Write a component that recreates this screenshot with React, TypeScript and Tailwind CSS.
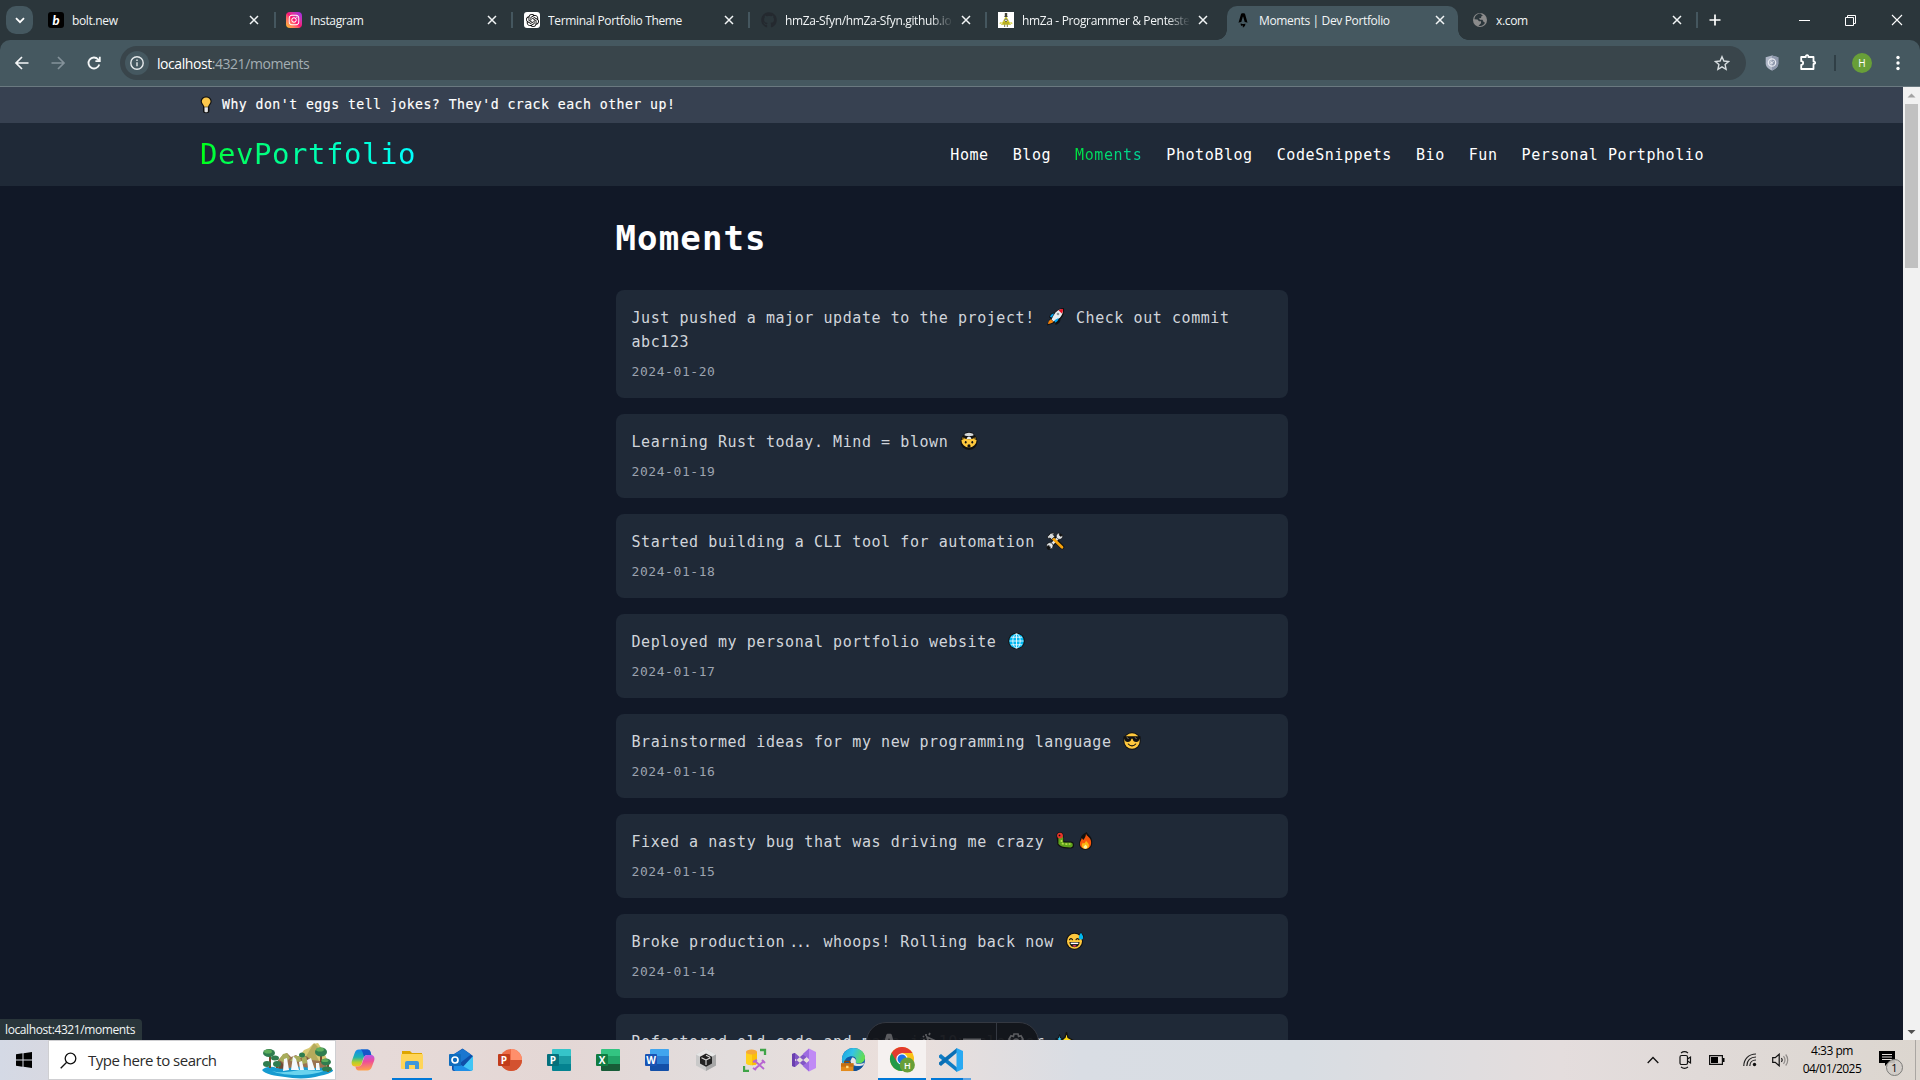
import type { ReactNode } from "react";
import { FaInstagram, FaGithub } from "react-icons/fa";
import { SiOpenai } from "react-icons/si";

const mono = "font-['DejaVu_Sans_Mono','Liberation_Mono',monospace]";

/* ---------- emoji drawings ---------- */

function Emoji({ children }: { children: ReactNode }) {
  return (
    <svg width={22} height={18} viewBox="-2 0 22 18" className="inline-block shrink-0 align-[-3px]">
      {children}
    </svg>
  );
}

const Bulb = () => (
  <svg width="19" height="18" viewBox="0 0 19 18" className="shrink-0">
    <g transform="translate(0 0) scale(1.14 1)">
      <path d="M6.300 .5c-3 0-4.800 2.200-4.800 5c0 2 1.300 3.200 2 4.600v5c0 1.500 1 2.200 2.800 2.200s2.800-.7 2.800-2.200v-5c.7-1.400 2-2.600 2-4.600c0-2.800-1.800-5-4.800-5z" fill="#111" />
      <path d="M6.300 1.500c-2.300 0-3.800 1.800-3.800 4c0 2 1.700 3 2.200 5.200h3.200c.5-2.200 2.200-3.200 2.200-5.200c0-2.200-1.500-4-3.800-4z" fill="#fdc84b" />
      <path d="M4.800 11.200h3v4c0 .6-.6 1-1.500 1s-1.500-.4-1.500-1z" fill="#e6e6e6" />
    </g>
  </svg>
);

const Rocket = () => (
  <Emoji>
    <path d="M18 0c-4 0-7 1.500-9 4.500c-3 0-5 1.500-6 5l2 .5l-1.500 1.500l-2.500 6l6-2l2-1l.5 2.500c3.500-1 5-3 5-6c3-2.500 4-6.500 3.500-11z" fill="#111" />
    <path d="M17 1c-3.500 0-7 2-9.500 6.500l-2 4l2 2l4-2c4-2.500 5.500-6 5.500-10.500z" fill="#e9edf0" />
    <path d="M17 1c-1.500 0-3 .3-4.500 1.200l3.300 3.300c.9-1.500 1.200-3 1.200-4.500z" fill="#e81224" />
    <path d="M8 5.500c-2 0-3.200 1.500-4 3.200l2 .8zM12.500 10c0 2-1 3.500-3.500 4.700l-.5-2.500z" fill="#00a3ee" />
    <path d="M4.800 11.300l2.700 2.500c-1.500 1.500-3.500 2-5.500 2.200c.3-2 1-3.600 2.800-4.700z" fill="#f7830b" />
    <circle cx="12" cy="6" r="1.300" fill="#8a9499" />
  </Emoji>
);

const MindBlown = () => (
  <Emoji>
    <circle cx="9" cy="9.500" r="8.500" fill="#111" />
    <path d="M4 3c0-2 2-3 5-3s5 1 5 3l-2 2h-6z" fill="#111" />
    <path d="M1.400 8a7.600 7.600 0 1 0 15.200 0l-3.100-1.300l-4.500 .5l-4.500-.5z" fill="#ffc83d" />
    <path d="M2.200 5.600l3 .4v.9l-3.400-.5zM15.800 5.600l-3 .4v.9l3.400-.5z" fill="#b98a16" />
    <path d="M4.600 3.400c-.4-1.300 .8-2.100 2-2.100c1-.9 3.800-.9 4.800 0c1.200 0 2.400 .8 2 2.100l-2.400 .6h-4z" fill="#d4d8da" />
    <path d="M7.500 5l1.500-.6l1.500 .6l1 2h-5z" fill="#e8ebec" />
    <ellipse cx="5.700" cy="10.200" rx=".9" ry="1.300" fill="#111" />
    <ellipse cx="12.300" cy="10.200" rx=".9" ry="1.300" fill="#111" />
    <ellipse cx="9" cy="14" rx="1.600" ry="1.700" fill="#111" />
  </Emoji>
);

const Tools = () => (
  <Emoji>
    <path d="M3 15.500L14 4" stroke="#111" strokeWidth="4.500" strokeLinecap="round" />
    <path d="M5 3.500L16 15" stroke="#111" strokeWidth="4.500" strokeLinecap="round" />
    <path d="M3.500 14.500L13.500 4.500" stroke="#e3e6e8" strokeWidth="2.500" />
    <path d="M16.500 3.200a3.200 3.200 0 1 1-3-2.200l-.2 2.200l1.500 1.200zM.8 14.500a3.200 3.200 0 1 1 3 2.500l.5-2.300l-1.500-1.200z" fill="#e3e6e8" stroke="#111" strokeWidth=".7" />
    <path d="M7 6.500L16 15.300" stroke="#f7a30b" strokeWidth="2.800" strokeLinecap="round" />
    <path d="M1.200 5l3.500-3.700l4-.5l-1.500 1.700l1.500 2l-3 3l-1.700-1.500l-1.300.5z" fill="#d5d9db" stroke="#111" strokeWidth=".8" />
  </Emoji>
);

const Globe = () => (
  <Emoji>
    <circle cx="8.500" cy="9" r="8.300" fill="#111" />
    <circle cx="8.500" cy="9" r="7.300" fill="#00b7f0" />
    <g stroke="#e9f8ff" strokeWidth=".9" fill="none">
      <ellipse cx="8.500" cy="9" rx="3.700" ry="7.200" />
      <path d="M8.500 1.800v14.400M1.500 9h14M2.800 5.200h11.400M2.800 12.800h11.400" />
    </g>
  </Emoji>
);

const Cool = () => (
  <Emoji>
    <circle cx="9" cy="9" r="8.700" fill="#111" />
    <circle cx="9" cy="9" r="7.700" fill="#ffc83d" />
    <path d="M.5 4.200h17v2.300l-1 .2c-.3 2-1.300 3.300-3.300 3.300s-3.200-1.200-3.600-3.300h-1.200c-.4 2.100-1.600 3.300-3.600 3.300s-3-1.300-3.300-3.300l-1-.2z" fill="#111" />
    <path d="M4 5.200l1.500 1.800M12 5.200l1.500 1.800" stroke="#8a8a8a" strokeWidth=".8" />
    <path d="M5.300 12c2 2.500 5.400 2.500 7.400 0" stroke="#111" strokeWidth="1.100" fill="none" strokeLinecap="round" />
  </Emoji>
);

const Bug = () => (
  <Emoji>
    <path d="M4 3.800L4.800 11C6.500 13.500 9 12.700 14.500 13" stroke="#111" strokeWidth="7" strokeLinecap="round" fill="none" />
    <path d="M4.800 6v5c1.700 2.500 5 1.800 9.700 2" stroke="#5ea21c" strokeWidth="4.800" strokeLinecap="round" fill="none" />
    <path d="M5.500 8v3c1.500 1.300 4 1 9 1" stroke="#b5dc4a" strokeWidth="1.700" fill="none" strokeDasharray="2 1.500" />
    <circle cx="4" cy="3.600" r="2.900" fill="#e8352a" />
    <circle cx="3.500" cy="3.400" r=".9" fill="#111" />
  </Emoji>
);

const Fire = () => (
  <Emoji>
    <g transform="translate(-.8 0)">
      <path d="M9.500 0c.5 2 4 3.800 5 7c1.800 6-1 10.800-6.200 10.800C3 17.800 1 13.500 2.200 9.500c.5-1.800 1.500-3 1.800-5C5 2.500 7.500 1.500 9.500 0z" fill="#111" />
      <path d="M8.800 1.500c.3 2.500 3.700 3.500 4.700 6.500c1.400 5-.8 8.800-5.200 8.800S2 13.500 3 10c.6-1.500 1.300-2.500 1.600-4l1.500 2c1.600-2 2.700-4 2.700-6.500z" fill="#f9570c" />
      <path d="M8.800 8.500c.8 2 3 2.500 3 5c0 2-1.300 3.300-3.500 3.300s-3.700-1.300-3.700-3.300c0-1.500.8-2 1-3l1 1c1.200-.6 2-1.500 2.200-3z" fill="#fdb813" />
      <path d="M8.500 12.500c.5 1 1.500 1.300 1.500 2.500s-.8 1.800-1.800 1.800s-1.900-.6-1.900-1.700s1.500-1.300 2.200-2.600z" fill="#fff3a6" />
    </g>
  </Emoji>
);

const Sweat = () => (
  <Emoji>
    <circle cx="8.500" cy="9.200" r="8.500" fill="#111" />
    <path d="M15 0c-1.800 2-3 3.500-3 5.500l3 3l3-3c0-2-1.300-3.500-3-5.500z" fill="#111" />
    <circle cx="8.500" cy="9.200" r="7.500" fill="#ffc83d" />
    <path d="M15 .8c-1.300 2-2.200 3.200-2.200 4.600a2.200 2.200 0 0 0 4.400 0c0-1.400-1-2.600-2.200-4.600z" fill="#00b7f0" />
    <path d="M3.500 7.800c.6-1.600 2.400-1.600 3 0M10 7.800c.6-1.600 2.400-1.600 3 0" stroke="#111" strokeWidth="1.100" fill="none" strokeLinecap="round" />
    <path d="M3.500 10h10c0 3.200-2 5.200-5 5.200s-5-2-5-5.200z" fill="#111" />
    <path d="M4.700 10.600h7.600v1.500h-7.600z" fill="#fff" />
    <path d="M6.300 14c1-1.200 3.400-1.200 4.400 0c-1 .9-3.400.9-4.400 0z" fill="#f03a5f" />
  </Emoji>
);

const Sparkles = () => (
  <Emoji>
    <path d="M10.500 0l1.500 5.500l4.500 2.500l-4.500 2.500l-1.500 6l-1.500-6l-4-2.500l4-2.500z" fill="#ffd91a" stroke="#111" strokeWidth="1.200" />
    <path d="M3.500 2.500l1 3.500l3 1l-3 1l-1 3l-1-3l-3-1l3-1z" fill="#35c6f5" stroke="#111" strokeWidth="1" />
  </Emoji>
);

/* ---------- browser chrome ---------- */

const Close = () => (
  <svg width="10" height="10" viewBox="0 0 10 10" className="shrink-0">
    <path d="M1 1l8 8M9 1l-8 8" stroke="#f2f5f6" strokeWidth="1.500" />
  </svg>
);

const BoltIcon = () => (
  <div className="flex size-4 items-center justify-center rounded-[3px] bg-black font-['Lato',sans-serif] text-[13px] leading-none font-black text-white italic">
    b
  </div>
);

const InstaIcon = () => (
  <div className="flex size-4 items-center justify-center rounded-[4px] bg-linear-to-bl from-[#9a16f0] via-[#fb0d72] to-[#ffc400]">
    <FaInstagram className="size-3 text-white" />
  </div>
);

const GptIcon = () => (
  <div className="flex size-4 items-center justify-center rounded-[3px] bg-white">
    <SiOpenai className="size-[13px] text-black" />
  </div>
);

const BillIcon = () => (
  <svg width="16" height="16" viewBox="0 0 16 16">
    <rect width="16" height="16" fill="#fff" />
    <path d="M8 4.500l4.500 8h-9z" fill="#e9e21c" stroke="#b9b42c" strokeWidth=".6" />
    <path d="M6.800 1h2.400v3.500h-2.400zM6.300 4.200h3.400v.8h-3.400z" fill="#44443a" />
    <circle cx="8" cy="8.300" r="1.300" fill="#fff" stroke="#333" strokeWidth=".7" />
    <path d="M3.500 10.500l-1.800 1M12.500 10.500l1.800 1" stroke="#d6cf26" strokeWidth="1.300" />
    <path d="M6.700 12.500v2.500M9.300 12.500v2.500" stroke="#6b6b30" strokeWidth=".9" />
    <path d="M5 11h6" stroke="#8b7f2a" />
  </svg>
);

const AstroIcon = ({ color = "#000", size = 16 }: { color?: string; size?: number }) => (
  <svg width={size} height={size} viewBox="0 0 16 16" fill={color}>
    <path d="M9.800 1.700c.2.200.3.500.4.900l2.300 8.200c-.9-.5-1.900-.8-2.800-.9l-1.500-5.200a.2.200 0 0 0-.4 0l-1.500 5.200c-1 .1-2 .4-2.800.9l2.400-8.200c.1-.4.200-.7.400-.9c.3-.3.700-.4 1.200-.4h1.100c.5 0 .9.1 1.200.4z" />
    <path d="M10.200 11.400c-.4.300-1.200.6-2.100.6c-1.100 0-2-.3-2.300-.8c-.4 1.400.1 2.300.9 2.900c0-.9.900-1 1.100-.1c.1.600-.2 1.200.3 1.700c.2-.9 1.200-1 1.700-1.700c.6-.8.600-1.700.4-2.600z" />
  </svg>
);

const EarthIcon = () => (
  <svg width="16" height="16" viewBox="0 0 16 16">
    <circle cx="8" cy="8" r="7" fill="#8b8b8b" />
    <path d="M8.500 1.500c-3.200 0-6 2.700-6 5.800l3 .2l1.500 1.800h2v2l-2.500 2.500c3 .8 5.500-.8 6.500-3l-1.500-1l-1-2h-2.500l-1-1.500l2-.3l.5-2h1.500z" fill="#2c373c" />
  </svg>
);

const tabs: { title: string; icon: ReactNode; pad: string; active?: boolean; fade?: boolean }[] = [
  { title: "bolt.new", icon: <BoltIcon />, pad: "pl-[9px] pr-[15px]" },
  { title: "Instagram", icon: <InstaIcon />, pad: "pl-[10px] pr-[14px]" },
  { title: "Terminal Portfolio Theme", icon: <GptIcon />, pad: "pl-[11px] pr-[14px]" },
  { title: "hmZa-Sfyn/hmZa-Sfyn.github.io", icon: <FaGithub className="size-4 text-[#24292f]" />, pad: "pl-[11px] pr-[14px]", fade: true },
  { title: "hmZa - Programmer & Pentester", icon: <BillIcon />, pad: "pl-[11px] pr-[16px]", fade: true },
  { title: "Moments | Dev Portfolio", icon: <AstroIcon />, pad: "pl-[11px] pr-[16px]", active: true },
  { title: "x.com", icon: <EarthIcon />, pad: "pl-[11px] pr-[14px]" },
];

function Tab({ title, icon, pad, active, fade }: (typeof tabs)[number]) {
  const noSep = active || title.startsWith("hmZa - ");
  return (
    <div className="relative flex h-[41px] w-[237px] shrink-0 pt-[7px]">
      {active && (
        <>
          <div className="absolute inset-x-[3px] top-[6px] bottom-0 rounded-t-[10px] bg-[#455860]" />
          <div className="absolute bottom-[1px] -left-[7px] size-[10px] bg-[radial-gradient(circle_at_0_0,transparent_9.5px,#455860_10px)]" />
          <div className="absolute -right-[7px] bottom-[1px] size-[10px] bg-[radial-gradient(circle_at_100%_0,transparent_9.5px,#455860_10px)]" />
        </>
      )}
      <div className={"relative flex h-[26px] min-w-0 flex-1 items-center " + pad}>
        <div className="flex size-4 shrink-0 items-center justify-center">{icon}</div>
        <div
          className={
            "ml-2 w-[169px] shrink-0 overflow-hidden pt-px text-[12px] tracking-[-0.35px] whitespace-nowrap text-[#f2f5f6] " +
            (fade ? "[mask-image:linear-gradient(90deg,#000_145px,transparent_168px)]" : "")
          }
        >
          {title}
        </div>
        <div className="ml-auto">
          <Close />
        </div>
      </div>
      {!noSep && <div className="mt-[5px] h-4 w-[2px] bg-[#45575f]" />}
    </div>
  );
}

function TabStrip() {
  return (
    <div className="flex h-[40px] bg-[#2b363b] pl-[6px]">
      <div className="mt-[6px] mr-[6px] flex h-7 w-[27px] shrink-0 items-center justify-center rounded-[10px] bg-[#455860]">
        <svg width="10" height="7" viewBox="0 0 10 7">
          <path d="M1 1.200l4 4l4-4" stroke="#fff" strokeWidth="1.800" fill="none" />
        </svg>
      </div>
      {tabs.map((t) => (
        <Tab key={t.title} {...t} />
      ))}
      <svg width="12" height="12" viewBox="0 0 12 12" className="mt-[14px] ml-[11px]">
        <path d="M6 .5v11M.5 6h11" stroke="#fff" strokeWidth="1.700" />
      </svg>
      <div className="mr-[17px] ml-auto flex h-[40px] items-center gap-[35px]">
        <div className="h-px w-[11px] bg-white" />
        <svg width="11" height="11" viewBox="0 0 11 11" fill="none" stroke="#fff">
          <path d="M.5 2.500h8v8h-8zM2.500 2.500v-2h8v8h-2" />
        </svg>
        <svg width="12" height="12" viewBox="0 0 12 12" stroke="#fff" strokeWidth="1.100">
          <path d="M1 1l10 10M11 1l-10 10" />
        </svg>
      </div>
    </div>
  );
}

function Toolbar() {
  return (
    <div className="bg-[#2b363b]">
      <div className="flex h-[46px] items-center rounded-t-[10px] bg-[#455860] pl-[14px]">
        <svg width="16" height="16" viewBox="0 0 16 16" fill="none" stroke="#f4f6f7" strokeWidth="1.700">
          <path d="M14.500 8h-12M8 2l-6 6l6 6" />
        </svg>
        <svg width="16" height="16" viewBox="0 0 16 16" fill="none" stroke="#84929a" strokeWidth="1.700" className="ml-5">
          <path d="M1.500 8h12M8 2l6 6l-6 6" />
        </svg>
        <svg width="16" height="16" viewBox="0 0 16 16" fill="none" stroke="#f4f6f7" strokeWidth="1.800" className="ml-5">
          <path d="M13.300 9.500a5.500 5.500 0 1 1-1.200-5.200l1.400 1.400M13.800 1.800v4.400h-4.400" />
        </svg>
        <div className="ml-[18px] flex h-[34px] w-[1626px] items-center rounded-full bg-[#39454b] pl-[5px]">
          <div className="flex size-6 items-center justify-center rounded-full bg-[#455860]">
            <svg width="14" height="14" viewBox="0 0 14 14" fill="none" stroke="#e6eaec" strokeWidth="1.400">
              <circle cx="7" cy="7" r="6.200" />
              <path d="M7 6.200v4M7 3.500v1.500" />
            </svg>
          </div>
          <div className="ml-2 text-[14px] tracking-[-0.44px] text-[#a4aeb3]">
            <span className="text-white">localhost</span>:4321/moments
          </div>
          <svg width="16" height="16" viewBox="0 0 16 16" fill="none" stroke="#d8dee1" strokeWidth="1.400" className="mr-4 ml-auto">
            <path d="M8 1.700l1.900 4.300l4.700.5l-3.500 3.100l1 4.700l-4.100-2.400l-4.100 2.400l1-4.700l-3.500-3.100l4.700-.5z" />
          </svg>
        </div>
        <svg width="14" height="16" viewBox="0 0 14 16" className="ml-[19px]">
          <path d="M7 .5l6.300 1.800v6c0 3.500-2.800 6-6.300 7.200c-3.500-1.200-6.300-3.700-6.300-7.200v-6z" fill="#aeb6c6" />
          <path d="M7 .5l6.300 1.800v6c0 3.500-2.800 6-6.300 7.200z" fill="#8f99ad" />
          <circle cx="7" cy="7.500" r="3.700" fill="none" stroke="#e8ebf2" strokeWidth="1.200" />
          <path d="M5.300 8.500l3.400-2M5.500 6.500l2 2.500" stroke="#e8ebf2" />
        </svg>
        <svg width="18" height="18" viewBox="0 0 18 18" fill="none" stroke="#fff" strokeWidth="1.800" className="mt-[-2px] ml-[20px]">
          <path d="M2.200 4h4.600c-.3-2.600 2.900-2.600 2.600 0h5.100v4.500c2.200-.2 2.200 2.700 0 2.500v5h-12.300v-4.200c2.600-.2 2.600-3.400 0-3.600z" strokeLinejoin="round" />
        </svg>
        <div className="ml-[17px] h-4 w-[2px] bg-[#303f46]" />
        <div className="ml-[16px] flex size-5 items-center justify-center rounded-full bg-[#689f38] text-[10px] text-white">H</div>
        <svg width="4" height="16" viewBox="0 0 4 16" fill="#fff" className="ml-6">
          <circle cx="2" cy="2.500" r="1.700" />
          <circle cx="2" cy="8" r="1.700" />
          <circle cx="2" cy="13.500" r="1.700" />
        </svg>
      </div>
      <div className="h-px bg-[#6a7980]" />
    </div>
  );
}

/* ---------- web page ---------- */

const Ellipsis = () => <span className="inline-block w-[28.8px] text-center tracking-[-2.2px]">...</span>;

const moments: { text: ReactNode; icons: ReactNode; rest?: string; date: string }[] = [
  { text: "Just pushed a major update to the project! ", icons: <Rocket />, rest: " Check out commit abc123", date: "2024-01-20" },
  { text: "Learning Rust today. Mind = blown ", icons: <MindBlown />, date: "2024-01-19" },
  { text: "Started building a CLI tool for automation ", icons: <Tools />, date: "2024-01-18" },
  { text: "Deployed my personal portfolio website ", icons: <Globe />, date: "2024-01-17" },
  { text: "Brainstormed ideas for my new programming language ", icons: <Cool />, date: "2024-01-16" },
  { text: "Fixed a nasty bug that was driving me crazy ", icons: <><Bug /><Fire /></>, date: "2024-01-15" },
  { text: <>Broke production<Ellipsis /> whoops! Rolling back now </>, icons: <Sweat />, date: "2024-01-14" },
  { text: "Refactored old code and made it 10x cleaner ", icons: <Sparkles />, date: "2024-01-13" },
];

const links = ["Home", "Blog", "Moments", "PhotoBlog", "CodeSnippets", "Bio", "Fun", "Personal Portpholio"];

function Page() {
  return (
    <div className={"h-full flex-1 overflow-hidden bg-[#111827] " + mono}>
      <div className="flex h-[36px] items-center bg-[#374151] pl-[199px] text-[13.2px] tracking-[0.455px] text-white [-webkit-text-stroke:0.15px_white]">
        <Bulb />
        <span className="ml-[4px] whitespace-pre">Why don't eggs tell jokes? They'd crack each other up!</span>
      </div>
      <div className="flex h-[63px] items-center justify-between bg-[#1f2937] pr-[199px] pl-[200px]">
        <div className="mb-px bg-linear-to-r from-[#00ff00] to-[#00ffff] bg-clip-text text-[29px] leading-9 tracking-[0.54px] text-transparent">
          DevPortfolio
        </div>
        <div className="flex gap-6 pt-[2px] text-[15px] tracking-[0.57px] text-white">
          {links.map((l) =>
            l === "Moments" ? (
              <span key={l} className="bg-linear-to-r from-[#00e03c] to-[#00d69a] bg-clip-text text-transparent">
                {l}
              </span>
            ) : (
              <span key={l}>{l}</span>
            ),
          )}
        </div>
      </div>
      <div className="mx-auto w-[672px] pt-8">
        <h1 className="h-10 text-[34px] leading-10 font-bold tracking-[1.13px] text-white">Moments</h1>
        <div className="mt-8 flex flex-col gap-4">
          {moments.map((m) => (
            <div key={m.date} className="rounded-lg bg-[#1f2937] px-4 pt-4 pb-4">
              <p className="text-[15px] leading-6 tracking-[0.57px] text-[#d1d5db]">
                {m.text}
                {m.icons}
                {m.rest}
              </p>
              <p className="mt-2 text-[13px] leading-5 tracking-[0.57px] text-[#9ca3af]">{m.date}</p>
            </div>
          ))}
        </div>
      </div>
    </div>
  );
}

function Scrollbar() {
  return (
    <div className="flex w-[17px] shrink-0 flex-col items-center bg-[#f1f1f1]">
      <svg width="17" height="17" viewBox="0 0 17 17" fill="#a3a3a3">
        <path d="M8.500 6.500l4 4h-8z" />
      </svg>
      <div className="h-[164px] w-[13px] bg-[#c1c1c1]" />
      <svg width="17" height="17" viewBox="0 0 17 17" fill="#505050" className="mt-auto">
        <path d="M8.500 11l4-4h-8z" />
      </svg>
    </div>
  );
}

function DevToolbar() {
  return (
    <div className="absolute top-[935px] left-[866px] flex h-10 w-[173px] rounded-full border border-[#343841] bg-[#13151a]/95 pt-[9px] text-[#5a5b5f]">
      <div className="flex w-[129px] justify-around pr-1 pl-0">
        <AstroIcon color="#5a5b5f" size={22} />
        <svg width="20" height="20" viewBox="0 0 20 20" fill="none" stroke="#5a5b5f" strokeWidth="1.700">
          <path d="M6 5l11 5l-5 2l-2 5zM3 5l-1-1M5 2l0 2M9 1l-1 2M2 8h2" />
        </svg>
        <svg width="20" height="20" viewBox="0 0 20 20" fill="none" stroke="#5a5b5f" strokeWidth="1.800">
          <path d="M1 7.500h18M1 13h18" />
        </svg>
      </div>
      <div className="-mt-[9px] w-px bg-[#343841]" />
      <svg width="20" height="20" viewBox="0 0 20 20" fill="none" stroke="#5a5b5f" strokeWidth="1.700" className="ml-[9px]">
        <path d="M8 2h4l.6 2.500l2.400-.7l2 3.400l-1.800 1.800l1.800 2l-2 3.400l-2.400-.7l-.6 2.500h-4l-.6-2.500l-2.400.7l-2-3.400l1.800-2l-1.800-1.800l2-3.400l2.400.7z" />
        <circle cx="10" cy="9.500" r="2.500" />
      </svg>
    </div>
  );
}

/* ---------- taskbar ---------- */

const Scenery = () => (
  <svg width="72" height="37" viewBox="0 0 72 37" className="ml-auto">
    <path d="M36 16l6-8l5-2l4-4l5-1l4 6l5 10l2 12h-31z" fill="#d8c873" />
    <path d="M52 1l4 4l-2 8l4 8l-8-3l-3 4l-4-6z" fill="#b5ab5c" />
    <path d="M16 18l5-5l4-2l4 4l5-2l4 3l6-2l6 4l8 1l6 4l3 8h-52v-10z" fill="#9a7350" />
    <path d="M17 18l4-6l4-1l3 5l-5 5zM28 19l4-5l5 0l3 6zM40 14l4 1l2 6l-6 1z" fill="#a8ad5c" />
    <path d="M18 19l4 4l-1 6h-5zM45 15l3 7l-3 6z" fill="#6f4a34" />
    <path d="M0 28c4-4 10-4 15-2c6 2 12 0 18-1s14 1 20 1s14-1 18 2c1 2-8 5-14 6c-8 3-24 3-34 1c-10-1-20-3-23-7z" fill="#169bd0" />
    <path d="M10 29c9 3 20 0 27-1s18 2 27 0c-8 4-20 5-28 5s-20-1-26-4z" fill="#6ad4ee" />
    <path d="M22 17l3-1l2 12l-6 1zM31 14l3 3l3 11h-8zM37 20l3-1l2 9h-4zM45 18l4-2l4 12h-7zM54 21l3 0l1 7h-4z" fill="#f4f9fc" />
    <g fill="#7b4a2c">
      <path d="M7 14h2v12h-2zM58 11h2v9h-2zM65 20h2v10h-2zM14 20h2v6h-2z" />
    </g>
    <g fill="#2f7d4f">
      <ellipse cx="7" cy="11" rx="6" ry="4" />
      <ellipse cx="13" cy="16" rx="4" ry="2.500" />
      <ellipse cx="5" cy="22" rx="4" ry="3" />
      <ellipse cx="15" cy="22" rx="4" ry="3" />
      <ellipse cx="59" cy="10" rx="6" ry="4.500" />
      <ellipse cx="64" cy="20" rx="5" ry="3.500" />
      <ellipse cx="65" cy="27" rx="5" ry="2.500" />
      <ellipse cx="40" cy="13" rx="3" ry="2.500" />
    </g>
    <g fill="#5fae5c">
      <ellipse cx="6" cy="9.500" rx="4" ry="2" />
      <ellipse cx="58" cy="7.500" rx="4" ry="2" />
      <ellipse cx="63" cy="18.500" rx="3.500" ry="1.500" />
    </g>
  </svg>
);

function Office({ letter, dark, top, mid, low, round }: { letter: string; dark: string; top: string; mid: string; low: string; round?: boolean }) {
  return (
    <svg width="24" height="24" viewBox="0 0 24 24">
      {round ? (
        <>
          <circle cx="13" cy="12" r="11" fill={mid} />
          <path d="M13 1a11 11 0 0 1 11 11h-11z" fill={top} />
          <path d="M2 12h22a11 11 0 0 1-22 0z" fill={low} />
        </>
      ) : (
        <>
          <path d="M6 1h17a1 1 0 0 1 1 1v6h-19v-6a1 1 0 0 1 1-1z" fill={top} />
          <path d="M5 8h19v8h-19z" fill={mid} />
          <path d="M5 16h19v6a1 1 0 0 1-1 1h-17a1 1 0 0 1-1-1z" fill={low} />
        </>
      )}
      <rect x="0" y="6" width="12" height="12" rx="1" fill={dark} />
      <text x="6" y="15.500" textAnchor="middle" fontSize="10" fontWeight="700" fontFamily="Open Sans, sans-serif" fill="#fff">
        {letter}
      </text>
    </svg>
  );
}

const Copilot = () => (
  <svg width="24" height="24" viewBox="0 0 24 24">
    <defs>
      <linearGradient id="cpA" x1="0" y1="0" x2="0" y2="1">
        <stop offset="0" stopColor="#1688ee" />
        <stop offset=".45" stopColor="#1bb3b0" />
        <stop offset=".75" stopColor="#b4cf2a" />
        <stop offset="1" stopColor="#f9c01e" />
      </linearGradient>
      <linearGradient id="cpB" x1="0.300" y1="0" x2=".4" y2="1">
        <stop offset="0" stopColor="#b05cf0" />
        <stop offset=".45" stopColor="#ee4d99" />
        <stop offset="1" stopColor="#ffa24a" />
      </linearGradient>
    </defs>
    <path d="M16.500 1.500c1.500 0 2.500 1 3 2.500l.8 3h-4.300c-2 0-3 1.500-3.500 3l-2 6c-.6 1.500-1.500 2.500-3 2.500h-3.500c-3 0-4-3-3-6l2.500-7c.9-2.500 2-4 4.500-4z" fill="url(#cpA)" />
    <path d="M16.500 1.500c1.500 0 2.500 1 3 2.500l.8 3h-4.300c-1.500 0-2.500.8-3 2l-1.500-5c-.4-1.300-.8-2-2-2.500z" fill="#1556c8" />
    <path d="M7.500 22.500c-1.500 0-2.300-1-2.700-2.500l-.4-1.500h2.800c2 0 3-1 3.600-2.500l2.200-6.500c.6-1.500 1.400-2.500 3-2.500h4c3 0 4 2.500 3.200 5.500l-2.400 6.500c-.8 2.200-2.200 3.500-4.500 3.500z" fill="url(#cpB)" />
  </svg>
);

const Explorer = () => (
  <svg width="24" height="24" viewBox="0 0 24 24">
    <path d="M2 3h8l2 2h10v4h-20z" fill="#dea500" />
    <path d="M2 6h20a1 1 0 0 1 1 1v13a1 1 0 0 1-1 1h-20a1 1 0 0 1-1-1v-13a1 1 0 0 1 1-1z" fill="#ffd558" />
    <path d="M5 21v-6a2 2 0 0 1 2-2h10a2 2 0 0 1 2 2v6h-4v-4h-6v4z" fill="#3f97dc" />
  </svg>
);

const Outlook = () => (
  <svg width="24" height="24" viewBox="0 0 24 24">
    <path d="M3 7.500l10.500-7l10.500 7.500v13l-2 2h-17a2 2 0 0 1-2-2z" fill="#0f4fa8" />
    <path d="M5 6l9-5l8 5.500l-11 8.500h-6z" fill="#1a76cf" />
    <path d="M24 8v13a2 2 0 0 1-2 2h-12z" fill="#41c5f5" />
    <path d="M5 13l17.500 10h-16a2.500 2.500 0 0 1-2-2z" fill="#1e8ee6" />
    <rect x="0" y="6" width="12" height="12" rx="1" fill="#0f6cbd" />
    <circle cx="6" cy="12" r="3" fill="none" stroke="#fff" strokeWidth="1.700" />
  </svg>
);

const Unity = () => (
  <svg width="24" height="24" viewBox="0 0 24 24">
    <path d="M12 1l10 5.500v11l-10 5.500l-10-5.500v-11z" fill="#c9c9c9" />
    <path d="M12 1l10 5.500l-10 5.500l-10-5.500z" fill="#e6e6e6" />
    <path d="M22 6.500v11l-10 5.500v-11z" fill="#a7a7a7" />
    <path d="M12 5.500l6 3.300v6.700l-6 3.300l-6-3.300v-6.700z" fill="#222" />
    <path d="M12 12l-4.500-2.300M12 12v5M12 12l4.500-2.300M12 7.300l4 2" stroke="#d9d9d9" strokeWidth="1.100" />
  </svg>
);

const Sql = () => (
  <svg width="24" height="24" viewBox="0 0 24 24">
    <path d="M3 4h11v11c0 3-11 3-11 0z" fill="#ffd21c" />
    <path d="M9 4h5v11c0 1.500-2 2.200-5 2.200z" fill="#fbbf0a" />
    <ellipse cx="8.500" cy="4" rx="5.500" ry="2.500" fill="#f5a83a" />
    <path d="M17 2h5v5M1 18v5h5" stroke="#3fa447" strokeWidth="2.300" fill="none" />
    <path d="M12 21l9-8M12 13l9 8" stroke="#b765d1" strokeWidth="1.800" />
    <path d="M10 14l4-2M19 12l3 3M10 20l3 2" stroke="#b765d1" strokeWidth="2" />
  </svg>
);

const VisualStudio = () => (
  <svg width="24" height="24" viewBox="0 0 24 24">
    <path d="M0 6l3-1l14 12v6l-17-15zM0 18l3 1l14-12v-6l-17 15z" fill="#8256c6" />
    <path d="M0 6l3-1v14l-3-1z" fill="#6a3fae" />
    <path d="M17 .5l7 3.500v16l-7 3.500l-6-5.500l6-5v-2l-6-5z" fill="#c08af5" />
    <path d="M17 .5v23l-6-5.500l6-5v-2l-6-5z" fill="#9d6be0" />
  </svg>
);

const Edge = () => (
  <svg width="25" height="25" viewBox="0 0 26 26">
    <defs>
      <linearGradient id="edgeA" x1="0" y1="0" x2="1" y2="0.300">
        <stop offset="0" stopColor="#1aa0dd" />
        <stop offset=".5" stopColor="#33c3e8" />
        <stop offset="1" stopColor="#62dd55" />
      </linearGradient>
    </defs>
    <circle cx="13" cy="13" r="12" fill="#0f5aa8" />
    <path d="M1 13c0-7 5.500-12 12-12s12 4.500 12 10c0 4-3 6-6.500 6c-2.500 0-4-1-3-2.500c1-2-.5-5-4-5c-4.500 0-8 2.500-8.500 8c-1-1-2-2.500-2-4.500z" fill="url(#edgeA)" />
    <path d="M11.500 11c2.500 0 4.500 2 4 4c-.6 1.500 .5 2.500 2.500 2.500c3 0 5-.5 6-1.500c0 2-1 3.500-3 3.500c-6 1-11-1-11.500-4.500z" fill="#e5e4e6" />
    <path d="M10 15c0 4 3 6 7 6c3 0 5-1 6-2c-2 4-6 6-10 6c-3 0-5-3-5-6c0-2 .8-3.500 2-4z" fill="#124f93" />
    <path d="M0 17h13v8h-13z" fill="#e38b1c" />
    <path d="M4 17v-2h5v2" stroke="#8a4a0a" strokeWidth="1.300" fill="none" />
    <path d="M0 17h13v3.500h-13z" fill="#c56f12" />
    <path d="M5.300 19.500h2.500v2.500h-2.500z" fill="#ffe08a" />
  </svg>
);

const Chrome = () => (
  <svg width="26" height="26" viewBox="-1 0 26 26">
    <circle cx="12" cy="12" r="12" fill="#fbc116" />
    <path d="M12 12L1.600 6A12 12 0 0 0 12 24l5-9z" fill="#229a48" />
    <path d="M1.600 6a12 12 0 0 1 20.800 0h-10.400l-5 9z" fill="#e33b2e" />
    <circle cx="12" cy="12" r="5.700" fill="#fff" />
    <circle cx="12" cy="12" r="4.500" fill="#1a73e8" />
    <circle cx="17.300" cy="18" r="7.600" fill="#689f38" />
    <text x="17.300" y="21.500" textAnchor="middle" fontSize="9" fontFamily="Open Sans, sans-serif" fill="#fff" fontWeight="600">
      H
    </text>
  </svg>
);

const VsCode = () => (
  <svg width="24" height="24" viewBox="0 0 24 24">
    <path d="M0 7.500l2-1.500l16 13.500v4.500l-18-14.500z" fill="#0f7cc4" />
    <path d="M0 16.500l2 1.500l16-13.500v-4.500l-18 14.500z" fill="#0a6fb5" />
    <path d="M17.500 0l6.500 3v18l-6.500 3z" fill="#29a9f2" />
  </svg>
);

const apps: { name: string; icon: ReactNode; state?: "open" | "active" | "multi" }[] = [
  { name: "copilot", icon: <Copilot /> },
  { name: "explorer", icon: <Explorer />, state: "open" },
  { name: "outlook", icon: <Outlook /> },
  { name: "powerpoint", icon: <Office letter="P" dark="#c13b1b" top="#ff8f6b" mid="#ed6c47" low="#d35230" round /> },
  { name: "publisher", icon: <Office letter="P" dark="#05707c" top="#36c4c9" mid="#1a9ba3" low="#048290" /> },
  { name: "excel", icon: <Office letter="X" dark="#107c41" top="#33c481" mid="#21a366" low="#185c37" /> },
  { name: "word", icon: <Office letter="W" dark="#1853b4" top="#41a5ee" mid="#2b7cd3" low="#134fa8" /> },
  { name: "unity", icon: <Unity /> },
  { name: "sql", icon: <Sql /> },
  { name: "visual-studio", icon: <VisualStudio /> },
  { name: "edge", icon: <Edge /> },
  { name: "chrome", icon: <Chrome />, state: "active" },
  { name: "vscode", icon: <VsCode />, state: "multi" },
];

function Taskbar() {
  return (
    <div className="flex h-10 bg-[linear-gradient(90deg,#d4d9e5_0px,#d8d8e0_60px,#e6dad8_380px,#e4d7d5_560px,#e2dddd_730px,#ebdfdb_900px,#d9dde4_1080px,#d8dde3_1300px,#e4dddd_1560px,#e0dad8_1700px,#dcd6cf_1920px)] text-black">
      <div className="flex w-[48px] items-center pl-4">
        <svg width="16" height="16" viewBox="0 0 16 16">
          <path d="M0 2.300l6.500-1v6.200h-6.500zM7.500 1.200l8.500-1.200v7.500h-8.500zM0 8.500h6.500v6.200l-6.500-1zM7.500 8.500h8.500v7.500l-8.500-1.200z" />
        </svg>
      </div>
      <div className="flex h-10 w-[288px] items-center border border-[#cfcfd2] bg-white pr-px pl-[11px]">
        <svg width="17" height="17" viewBox="0 0 17 17" fill="none" stroke="#111" strokeWidth="1.300">
          <circle cx="10.500" cy="6.500" r="5.300" />
          <path d="M6.700 10.300l-6 6" />
        </svg>
        <span className="ml-[11px] text-[15px] tracking-[-0.5px] whitespace-nowrap text-[#2b2b2b]">Type here to search</span>
        <Scenery />
      </div>
      <div className="ml-[3px] flex">
        {apps.map((a) => (
          <div key={a.name} className={"mr-px flex w-12 flex-col items-center " + (a.state === "active" ? "bg-[#f5f1f0]" : "")}>
            <div className="flex h-[38px] items-center pt-px">{a.icon}</div>
            {a.state === "open" && <div className="h-[2px] w-10 bg-[#0078d7]" />}
            {a.state === "active" && <div className="h-[2px] w-12 bg-[#0078d7]" />}
            {a.state === "multi" && (
              <div className="flex">
                <div className="h-[2px] w-8 bg-[#0078d7]" />
                <div className="h-[2px] w-2 bg-[#5fa6e4]" />
              </div>
            )}
          </div>
        ))}
      </div>
      <div className="ml-auto flex items-center">
        <svg width="12" height="8" viewBox="0 0 12 8" fill="none" stroke="#111" strokeWidth="1.300">
          <path d="M.7 7l5.300-5.500l5.300 5.500" />
        </svg>
        <svg width="14" height="18" viewBox="0 0 14 18" fill="none" stroke="#111" strokeWidth="1.200" className="ml-[19px]">
          <rect x="2" y="4.500" width="7.500" height="9" rx="1.500" />
          <path d="M9.500 8l3-2v6l-3-2M3 2c2-1.500 5-1.500 7 0M3 16c2 1.500 5 1.500 7 0" />
        </svg>
        <svg width="16" height="10" viewBox="0 0 16 10" className="ml-[17px]">
          <path d="M.6.600h12.800v8.800h-12.800z" fill="none" stroke="#111" strokeWidth="1.200" />
          <path d="M2 2h7v6h-7zM14 3h1.500v4h-1.500z" />
        </svg>
        <svg width="14" height="14" viewBox="0 0 14 14" fill="none" stroke="#222" className="ml-[18px]" strokeWidth="1.200">
          <path d="M.8 13c0-7 5-12 12.200-12" />
          <path d="M3.800 13c0-5.500 3.700-9 9.200-9" />
          <path d="M6.800 13c0-3.800 2.500-6 6.200-6" />
          <circle cx="11.500" cy="11.500" r="1.700" fill="#111" stroke="none" />
        </svg>
        <svg width="17" height="14" viewBox="0 0 17 14" fill="none" stroke="#111" strokeWidth="1.200" className="ml-[15px]">
          <path d="M.7 4.700h2.500l4-3.500v11.600l-4-3.500h-2.500z" />
          <path d="M9.500 5c.9 1.200.9 2.800 0 4" />
          <path d="M11.500 3.200c1.800 2.300 1.800 5.300 0 7.600M13.700 1.500c2.700 3.200 2.700 7.800 0 11" stroke="#8f8b89" />
        </svg>
        <div className="ml-[7px] flex w-[72px] flex-col items-center text-[12px] leading-[18px] tracking-[-0.5px] whitespace-nowrap">
          <span>4:33 pm</span>
          <span>04/01/2025</span>
        </div>
        <div className="relative ml-[11px] h-4 w-[16px]">
          <svg width="16" height="16" viewBox="0 0 16 16" className="-mt-px">
            <path d="M0 0h16v12h-7l-3 3v-3h-6z" />
            <path d="M3 3.500h10M3 6h10M3 8.500h10" stroke="#e5e0dc" strokeWidth="1" />
          </svg>
          <div className="absolute top-[7px] left-[7px] flex size-[17px] items-center justify-center rounded-full border border-[#7b7b78] bg-[#d0ccc6]/90 text-[11px] leading-none">
            1
          </div>
        </div>
        <div className="ml-[20px] h-10 w-px bg-[#aaa6a2]" />
        <div className="w-1" />
      </div>
    </div>
  );
}

export default function App() {
  return (
    <div className="flex h-[1080px] w-[1920px] flex-col overflow-hidden bg-[#111827] font-['Open_Sans','Noto_Sans',sans-serif]">
      <TabStrip />
      <Toolbar />
      <div className="relative flex h-[953px] overflow-hidden">
        <Page />
        <Scrollbar />
        <DevToolbar />
        <div className="absolute bottom-0 left-0 flex h-[21px] w-[142px] items-center rounded-tr-[4px] bg-[#29353a] pl-[5px] text-[12px] tracking-[-0.4px] whitespace-nowrap text-[#f2f5f6]">
          localhost:4321/moments
        </div>
      </div>
      <Taskbar />
    </div>
  );
}
